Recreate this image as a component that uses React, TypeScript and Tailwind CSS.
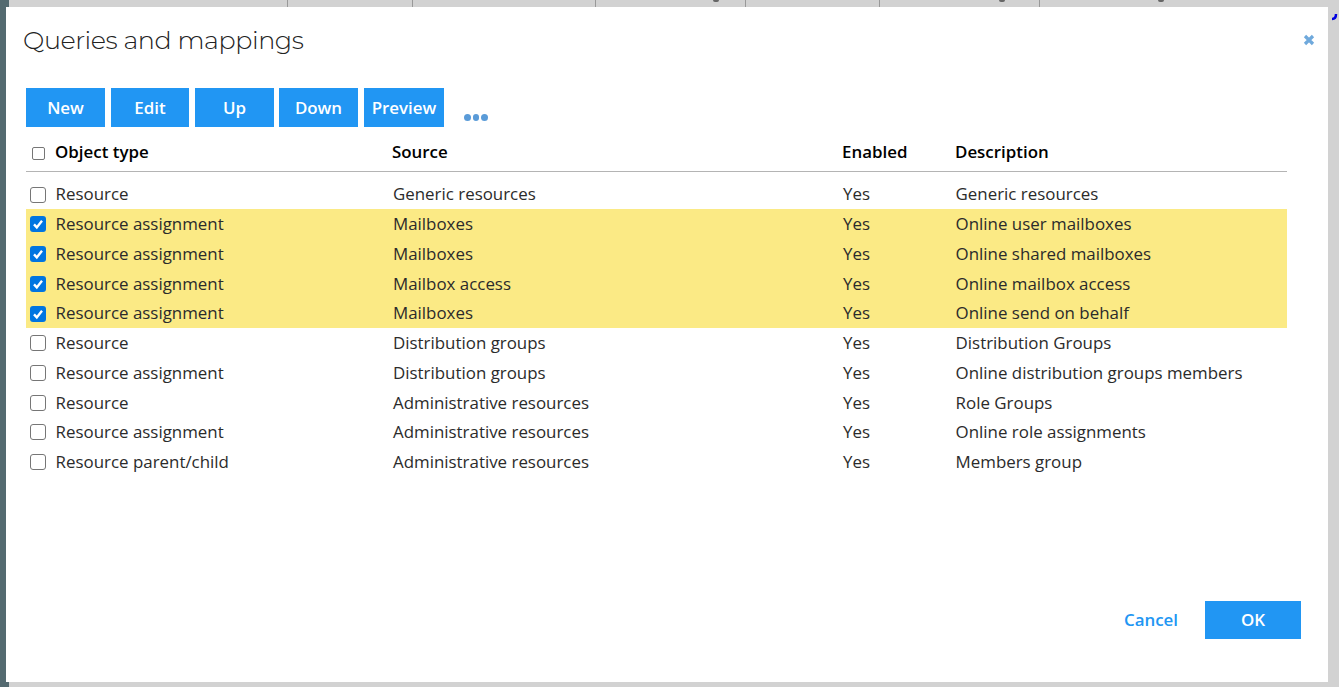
const font = "font-['Open_Sans',sans-serif]";

const rows = [
  ["Resource", "Generic resources", "Yes", "Generic resources", false],
  ["Resource assignment", "Mailboxes", "Yes", "Online user mailboxes", true],
  ["Resource assignment", "Mailboxes", "Yes", "Online shared mailboxes", true],
  ["Resource assignment", "Mailbox access", "Yes", "Online mailbox access", true],
  ["Resource assignment", "Mailboxes", "Yes", "Online send on behalf", true],
  ["Resource", "Distribution groups", "Yes", "Distribution Groups", false],
  ["Resource assignment", "Distribution groups", "Yes", "Online distribution groups members", false],
  ["Resource", "Administrative resources", "Yes", "Role Groups", false],
  ["Resource assignment", "Administrative resources", "Yes", "Online role assignments", false],
  ["Resource parent/child", "Administrative resources", "Yes", "Members group", false],
] as const;

const buttons = [
  ["New", "w-[79px]"],
  ["Edit", "w-[78px] ml-[6px]"],
  ["Up", "w-[79px] ml-[6px]"],
  ["Down", "w-[79px] ml-[5px]"],
  ["Preview", "w-[80px] ml-[6px]"],
] as const;

function Box({ checked, small }: { checked?: boolean; small?: boolean }) {
  if (checked) {
    return (
      <span className="flex h-4 w-4 items-center justify-center rounded-[3px] bg-[#0075e1]">
        <svg width="12" height="12" viewBox="0 0 12 12" fill="none">
          <path d="M2 6.4 4.8 9.4 10 2.8" stroke="#fff" strokeWidth="2.4" />
        </svg>
      </span>
    );
  }
  return (
    <span
      className={
        small
          ? "block h-[13px] w-[13px] rounded-[2px] border border-[#767676] bg-white"
          : "block h-4 w-4 rounded-[3px] border border-[#767676] bg-white"
      }
    />
  );
}

export default function App() {
  return (
    <div className={`relative h-[687px] w-[1339px] overflow-hidden bg-[#d2d2d2] ${font}`}>
      <div className="flex h-[7px]">
        <div className="w-[288px] shrink-0 border-r border-[#999]" />
        <div className="w-[125px] shrink-0 border-r border-[#999]" />
        <div className="w-[183px] shrink-0 border-r border-[#999]" />
        <div className="w-[150px] shrink-0 border-r border-[#999]" />
        <div className="w-[134px] shrink-0 border-r border-[#999]" />
        <div className="w-[160px] shrink-0 border-r border-[#999]" />
      </div>
      <span className="absolute left-[713px] top-0 h-[2px] w-[6px] rounded-b-sm bg-[#666]" />
      <span className="absolute left-[999px] top-0 h-[2px] w-[6px] rounded-b-sm bg-[#666]" />
      <span className="absolute left-[1158px] top-0 h-[2px] w-[6px] rounded-b-sm bg-[#666]" />
      <div className="absolute bottom-0 left-0 top-0 w-[9px] bg-[#546a70]" />
      <svg className="absolute right-0 top-[7px]" width="9" height="14" viewBox="0 0 9 14">
        <path d="M2 12 Q6 12 6 7" fill="none" stroke="#0000e0" strokeWidth="2.5" />
      </svg>

      <div className="absolute left-[6px] top-[7px] flex h-[675px] w-[1322px] flex-col bg-white">
        <div className="flex h-[66px] items-start justify-between pl-[17px] pr-[13px] pt-[15px]">
          <h1 className="font-['Montserrat','Lato',sans-serif] text-[25.4px] font-light leading-[36px] tracking-[-0.4px] text-[#222]">
            Queries and mappings
          </h1>
          <svg className="mt-[12px]" width="12" height="12" viewBox="0 0 12 12">
            <path d="M2 2 10 10M10 2 2 10" stroke="#6fa9dc" strokeWidth="3.2" />
          </svg>
        </div>

        <div className="ml-[20px] mt-[15px] flex w-[1261px] items-start">
          {buttons.map(([label, w]) => (
            <button
              key={label}
              className={`h-[39px] ${w} bg-[#2196f3] text-center text-[16.9px] font-semibold text-white`}
            >
              {label}
            </button>
          ))}
          <div className="ml-[20px] mt-[26px] flex gap-[2px]">
            <span className="h-[6.5px] w-[6.5px] rounded-full bg-[#5a9bd8]" />
            <span className="h-[6.5px] w-[6.5px] rounded-full bg-[#5a9bd8]" />
            <span className="h-[6.5px] w-[6.5px] rounded-full bg-[#5a9bd8]" />
          </div>
        </div>

        <div className="ml-[20px] w-[1261px]">
          <div className="flex h-[45px] items-center border-b border-[#b4b4b4] pt-[6px] text-[16.9px] font-semibold text-black">
            <div className="w-[29px] shrink-0 pl-[6px] pt-[2px]">
              <Box small />
            </div>
            <div className="w-[337px] shrink-0">Object type</div>
            <div className="w-[450px] shrink-0">Source</div>
            <div className="w-[113px] shrink-0">Enabled</div>
            <div>Description</div>
          </div>
          <div className="mt-[7.82px]">
            {rows.map(([type, source, enabled, desc, checked], i) => (
              <div
                key={i}
                className={`flex h-[29.72px] items-center pb-[1px] text-[16.9px] text-[#2b2b2b] ${checked ? "bg-[#fbea85]" : ""} ${i === 1 ? "shadow-[0_-1px_0_#fbea85]" : ""}`}
              >
                <div className="w-[29.6px] shrink-0 pl-[4px] pt-[1px]">
                  <Box checked={checked} />
                </div>
                <div className="relative w-[337.4px] shrink-0">
                  {type}
                  {i === 4 ? <span className="absolute left-[152px] top-[18px] h-px w-px bg-[#0000e0]" /> : null}
                </div>
                <div className="w-[450px] shrink-0">{source}</div>
                <div className="w-[112.6px] shrink-0">{enabled}</div>
                <div>{desc}</div>
              </div>
            ))}
          </div>
        </div>

        <div className="mt-auto flex items-center justify-end pb-[43px] pr-[27px]">
          <button className="mr-[27px] text-[16.9px] font-semibold text-[#2196f3]">Cancel</button>
          <button className="h-[38px] w-[96px] bg-[#2196f3] text-[16.9px] font-semibold text-white">OK</button>
        </div>
      </div>
    </div>
  );
}
